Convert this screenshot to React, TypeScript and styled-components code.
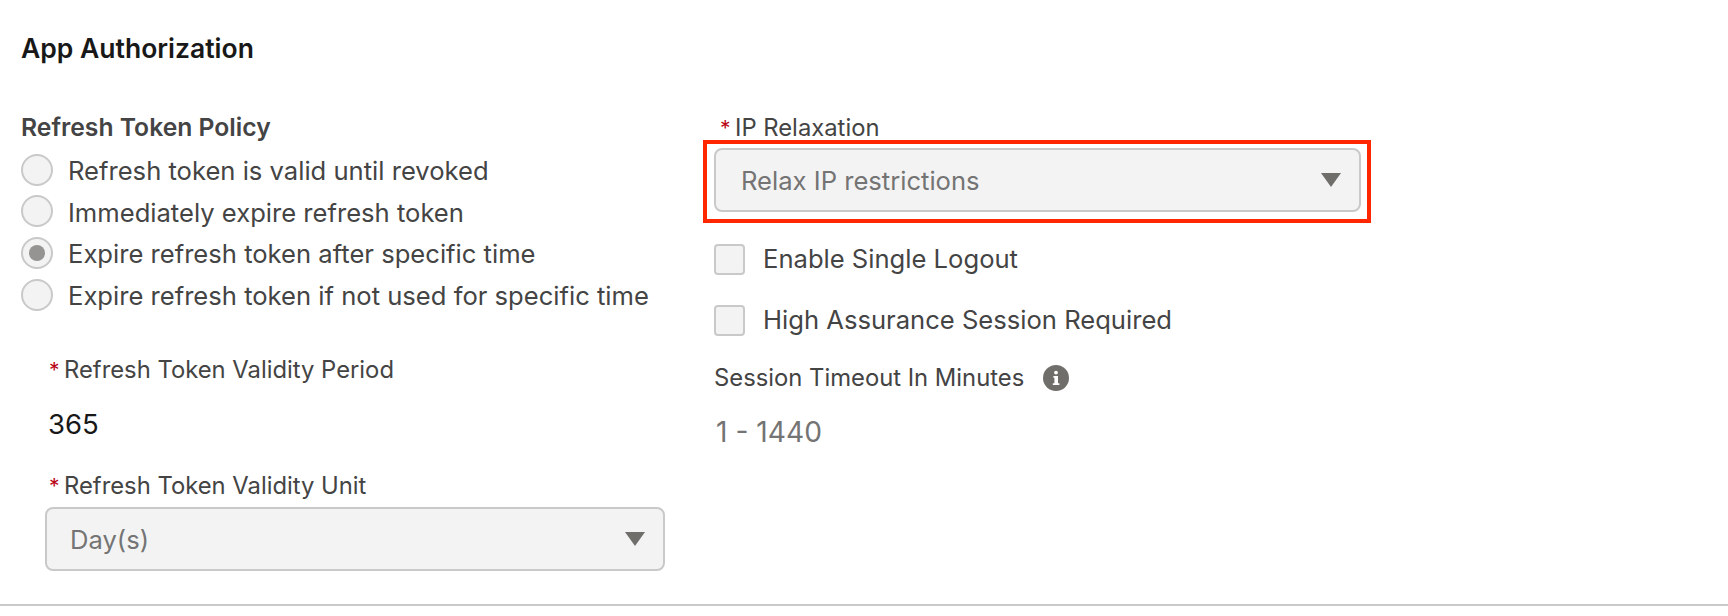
import React from "react";
import styled, { createGlobalStyle } from "styled-components";

const Global = createGlobalStyle`
  html, body { margin: 0; padding: 0; background: #fff; }
  body { font-family: Inter, "Liberation Sans", sans-serif; color: #444; }
`;

const Page = styled.div`
  width: 1728px;
  height: 616px;
  box-sizing: border-box;
  padding-top: 31px;
  overflow: hidden;
  display: flex;
  flex-direction: column;
`;

const Title = styled.h2`
  margin: 0 0 47px 21px;
  font-size: 26.5px;
  line-height: 34px;
  font-weight: 600;
  color: #181818;
`;

const Columns = styled.div`
  display: flex;
  height: 492px;
  padding-left: 21px;
  border-bottom: 2px solid #c9c9c9;
  box-sizing: content-box;
`;

const LeftColumn = styled.div`
  width: 693px;
  display: flex;
  flex-direction: column;
`;

const RightColumn = styled.div`
  width: 647px;
  display: flex;
  flex-direction: column;
`;

const Heading = styled.div`
  font-size: 24.7px;
  line-height: 30px;
  font-weight: 600;
  color: #444;
`;

const RadioGroup = styled.div`
  margin-top: 7px;
  display: flex;
  flex-direction: column;
`;

const RadioRow = styled.label`
  height: 41.6px;
  display: flex;
  align-items: center;
  gap: 15px;
  font-size: 25.6px;
`;

const RadioText = styled.span`
  margin-top: 2px;
`;

const Radio = styled.span<{ $checked?: boolean }>`
  width: 32px;
  height: 32px;
  box-sizing: border-box;
  border: 2px solid #c9c9c9;
  border-radius: 50%;
  background: #f3f3f3;
  display: flex;
  align-items: center;
  justify-content: center;
  flex: none;
  &::after {
    content: "";
    display: ${(p) => (p.$checked ? "block" : "none")};
    width: 16px;
    height: 16px;
    border-radius: 50%;
    background: #969492;
  }
`;

const SubFields = styled.div`
  padding-left: 24px;
  width: 620px;
  margin-top: 39px;
  display: flex;
  flex-direction: column;
`;

const FieldLabel = styled.div`
  font-size: 23.8px;
  line-height: 30px;
  padding-top: 1px;
  margin-bottom: -1px;
  color: #444;
`;

const Star = styled.span<{ $inset?: number }>`
  color: #ba0517;
  display: inline-block;
  width: 15px;
  padding-left: ${(p) => p.$inset ?? 4}px;
  font-size: 21px;
`;

const Value = styled.div`
  font-size: 27.5px;
  line-height: 32px;
  color: #181818;
  padding-left: 3px;
  margin-top: 23px;
`;

const SelectBox = styled.div<{ $pad: number }>`
  height: 64px;
  box-sizing: border-box;
  border: 2px solid #c9c9c9;
  border-radius: 8px;
  background: #f3f3f3;
  display: flex;
  align-items: center;
  justify-content: space-between;
  padding: 0 18px 0 ${(p) => p.$pad}px;
  font-size: 25.6px;
  color: #747474;
`;

const Arrow = styled.span`
  width: 0;
  height: 0;
  border-left: 10px solid transparent;
  border-right: 10px solid transparent;
  border-top: 14px solid #706e6b;
`;

const Highlight = styled.div`
  margin: -3px 0 0 -11px;
  border: 4px solid #ff2600;
  padding: 4px 6px 7px 7px;
  width: 668px;
  box-sizing: border-box;
`;

const CheckRow = styled.label<{ $top: number }>`
  display: flex;
  align-items: center;
  gap: 18px;
  height: 31px;
  margin-top: ${(p) => p.$top}px;
  font-size: 25.6px;
`;

const CheckText = styled.span`
  margin-top: -2px;
`;

const CheckBox = styled.span`
  width: 31px;
  height: 31px;
  box-sizing: border-box;
  border: 2px solid #c9c9c9;
  border-radius: 4px;
  background: #f3f3f3;
  flex: none;
`;

const TimeoutLabel = styled(FieldLabel)`
  display: flex;
  align-items: center;
  gap: 19px;
  padding-top: 0;
  margin-bottom: 0;
  margin-top: 27px;
`;

const InfoIcon = styled.svg`
  width: 26px;
  height: 26px;
  flex: none;
`;

const Placeholder = styled.div`
  font-size: 28.2px;
  line-height: 34px;
  color: #747474;
  margin-top: 22px;
  padding-left: 2px;
`;

const Spaced = styled.div<{ $top: number }>`
  margin-top: ${(p) => p.$top}px;
`;

export default function App() {
  return (
    <Page>
      <Global />
      <Title>App Authorization</Title>
      <Columns>
        <LeftColumn>
          <Heading>Refresh Token Policy</Heading>
          <RadioGroup>
            <RadioRow><Radio /><RadioText>Refresh token is valid until revoked</RadioText></RadioRow>
            <RadioRow><Radio /><RadioText>Immediately expire refresh token</RadioText></RadioRow>
            <RadioRow><Radio $checked /><RadioText>Expire refresh token after specific time</RadioText></RadioRow>
            <RadioRow><Radio /><RadioText>Expire refresh token if not used for specific time</RadioText></RadioRow>
          </RadioGroup>
          <SubFields>
            <FieldLabel><Star>*</Star>Refresh Token Validity Period</FieldLabel>
            <Value>365</Value>
            <Spaced $top={30}>
              <FieldLabel><Star>*</Star>Refresh Token Validity Unit</FieldLabel>
            </Spaced>
            <Spaced $top={6}>
              <SelectBox $pad={23}>Day(s)<Arrow /></SelectBox>
            </Spaced>
          </SubFields>
        </LeftColumn>
        <RightColumn>
          <FieldLabel><Star $inset={6}>*</Star>IP Relaxation</FieldLabel>
          <Highlight>
            <SelectBox $pad={25}>Relax IP restrictions<Arrow /></SelectBox>
          </Highlight>
          <CheckRow $top={21}><CheckBox /><CheckText>Enable Single Logout</CheckText></CheckRow>
          <CheckRow $top={30}><CheckBox /><CheckText>High Assurance Session Required</CheckText></CheckRow>
          <TimeoutLabel>
            Session Timeout In Minutes
            <InfoIcon viewBox="0 0 26 26">
              <circle cx="13" cy="13" r="13" fill="#706e6b" />
              <circle cx="13" cy="7.6" r="1.9" fill="#fff" />
              <path d="M10.4 11h4.6v7.2h1.4V20H9.8v-1.8h1.6v-5.4h-1z" fill="#fff" />
            </InfoIcon>
          </TimeoutLabel>
          <Placeholder>1 - 1440</Placeholder>
        </RightColumn>
      </Columns>
    </Page>
  );
}
